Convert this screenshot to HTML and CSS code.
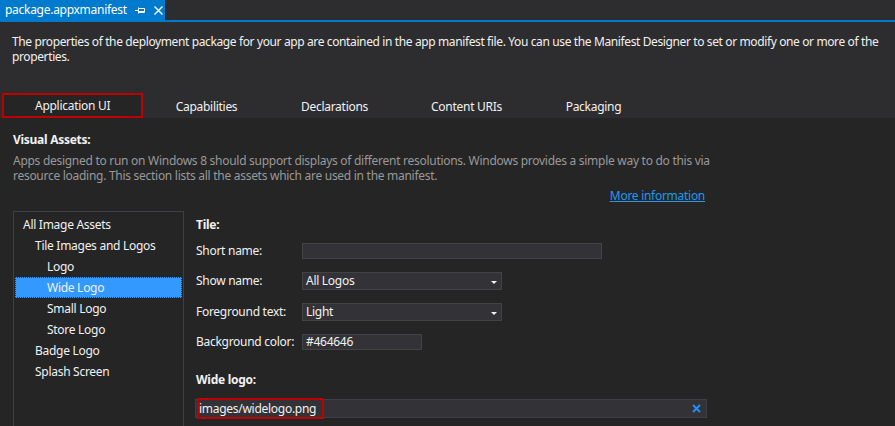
FILE: index.html
```html
<!DOCTYPE html>
<html>
<head>
<meta charset="utf-8">
<link rel="stylesheet" href="styles.css">
</head>
<body>
<div class="doc-bar">
  <div class="doc-tab">
    <span class="doc-title">package.appxmanifest</span>
    <svg class="pin" width="10" height="8" viewBox="0 0 10 8"><path d="M0 4.5H3M3.5 1.5V7.5M3.5 2.5H9.5V6.5H3.5M3.5 5.5H9.5" stroke="#fff" stroke-width="1" fill="none"/></svg>
    <svg class="close" width="9" height="9" viewBox="0 0 9 9"><path d="M0.5 0.5L8.5 8.5M8.5 0.5L0.5 8.5" stroke="#fff" stroke-width="1.4"/></svg>
  </div>
</div>
<div class="header">
  <p class="intro">The properties of the deployment package for your app are contained in the app manifest file. You can use the Manifest Designer to set or modify one or more of the properties.</p>
  <div class="tabs">
    <div class="tab selected">Application UI</div>
    <div class="tab t2">Capabilities</div>
    <div class="tab t3">Declarations</div>
    <div class="tab t4">Content URIs</div>
    <div class="tab t5">Packaging</div>
  </div>
</div>
<div class="content">
  <div class="section-title">Visual Assets:</div>
  <p class="desc">Apps designed to run on Windows 8 should support displays of different resolutions. Windows provides a simple way to do this via resource loading. This section lists all the assets which are used in the manifest.</p>
  <div class="link-row"><a class="link" href="#">More information</a></div>
  <div class="main">
    <div class="tree">
      <div class="item l0">All Image Assets</div>
      <div class="item l1">Tile Images and Logos</div>
      <div class="item l2">Logo</div>
      <div class="item l2 sel">Wide Logo</div>
      <div class="item l2">Small Logo</div>
      <div class="item l2">Store Logo</div>
      <div class="item l1">Badge Logo</div>
      <div class="item l1">Splash Screen</div>
    </div>
    <div class="form">
      <div class="form-title">Tile:</div>
      <div class="row r1">
        <div class="label">Short name:</div>
        <div class="input w300"></div>
      </div>
      <div class="row">
        <div class="label">Show name:</div>
        <div class="select w200"><span>All Logos</span><span class="arrow"></span></div>
      </div>
      <div class="row">
        <div class="label">Foreground text:</div>
        <div class="select w200"><span>Light</span><span class="arrow"></span></div>
      </div>
      <div class="row">
        <div class="label">Background color:</div>
        <div class="input w120">#464646</div>
      </div>
      <div class="form-title wide-title">Wide logo:</div>
      <div class="file-input">
        <span>images/widelogo.png</span>
        <svg class="clear" width="9" height="9" viewBox="0 0 9 9"><path d="M1 1L8 8M8 1L1 8" stroke="#1e90ff" stroke-width="1.8"/></svg>
        <div class="highlight"></div>
      </div>
    </div>
  </div>
</div>
</body>
</html>
```

FILE: styles.css
```css
html, body {
  margin: 0;
  padding: 0;
}
body {
  background: #252526;
  color: #f1f1f1;
  font-family: "Noto Sans", "Open Sans", sans-serif;
  font-size: 12px;
  line-height: 15px;
  letter-spacing: -0.28px;
  width: 895px;
  height: 426px;
  overflow: hidden;
}
.doc-bar {
  height: 20px;
  background: #2d2d30;
  border-bottom: 2px solid #007acc;
  display: flex;
}
.doc-tab {
  background: #007acc;
  width: 165px;
  height: 20px;
  display: flex;
  align-items: center;
  box-sizing: border-box;
  padding-left: 5px;
  color: #fff;
}
.doc-title {
  line-height: 20px;
}
.pin {
  margin-left: 8px;
}
.close {
  margin-left: 9px;
}
.header {
  background: #2d2d30;
  padding-top: 12px;
}
.intro {
  margin: 0;
  padding: 0 0 0 12px;
  width: 880px;
  letter-spacing: -0.38px;
}
.tabs {
  display: flex;
  margin-top: 29px;
  padding-left: 2px;
  height: 25px;
}
.tab {
  box-sizing: border-box;
  height: 25px;
  line-height: 23px;
  padding-top: 2px;
  text-align: center;
}
.t2 { width: 127px; }
.t3 { width: 129px; }
.t4 { width: 135px; }
.t5 { width: 119px; }
.tab.selected {
  background: #252526;
  border: 2px solid #c00000;
  line-height: 20px;
  padding: 1px 0 0 31px;
  width: 141px;
  text-align: left;
}
.content {
  padding: 14px 13px 0;
}
.section-title {
  font-weight: bold;
}
.desc {
  margin: 6px 0 0;
  color: #999999;
  width: 700px;
}
.link-row {
  width: 692px;
  text-align: right;
  margin-top: 5px;
}
.link {
  color: #1e9af0;
  text-decoration: underline;
}
.main {
  display: flex;
  margin-top: 8px;
  gap: 11px;
}
.tree {
  width: 171px;
  height: 230px;
  box-sizing: border-box;
  border: 1px solid #3f3f46;
  padding: 2px 1px 0;
}
.item {
  height: 21px;
  line-height: 21px;
  box-sizing: border-box;
  padding-left: 8px;
}
.item.l1 { padding-left: 20px; }
.item.l2 { padding-left: 32px; }
.item.sel {
  background: #3399ff;
  border: 1px dotted #16365e;
  line-height: 19px;
  padding-left: 31px;
}
.form {
  padding-top: 6px;
  width: 512px;
}
.form-title {
  font-weight: bold;
  padding-left: 1px;
}
.row {
  display: flex;
  align-items: center;
  margin-top: 13px;
}
.row.r1 {
  margin-top: 11px;
}
.label {
  width: 106px;
  padding-left: 1px;
  margin-top: -2px;
}
.input, .select {
  box-sizing: border-box;
  background: #333337;
  border: 1px solid #434346;
  height: 16px;
  line-height: 14px;
  padding-left: 3px;
}
.select {
  height: 18px;
  line-height: 16px;
  display: flex;
  justify-content: space-between;
  align-items: center;
  padding-right: 4px;
}
.arrow {
  width: 0;
  height: 0;
  border-left: 3px solid transparent;
  border-right: 3px solid transparent;
  border-top: 3px solid #f1f1f1;
  margin-top: 2px;
}
.w300 { width: 300px; }
.w200 { width: 200px; }
.w120 { width: 120px; }
.wide-title {
  margin-top: 22px;
}
.file-input {
  position: relative;
  margin-top: 12px;
  box-sizing: border-box;
  width: 512px;
  height: 19px;
  background: #333337;
  border: 1px solid #3f3f46;
  display: flex;
  align-items: center;
  justify-content: space-between;
  padding: 0 5px 0 3px;
}
.highlight {
  position: absolute;
  left: 1px;
  top: -2px;
  width: 127px;
  height: 21px;
  border: 2px solid #c00000;
  box-sizing: border-box;
}
```
